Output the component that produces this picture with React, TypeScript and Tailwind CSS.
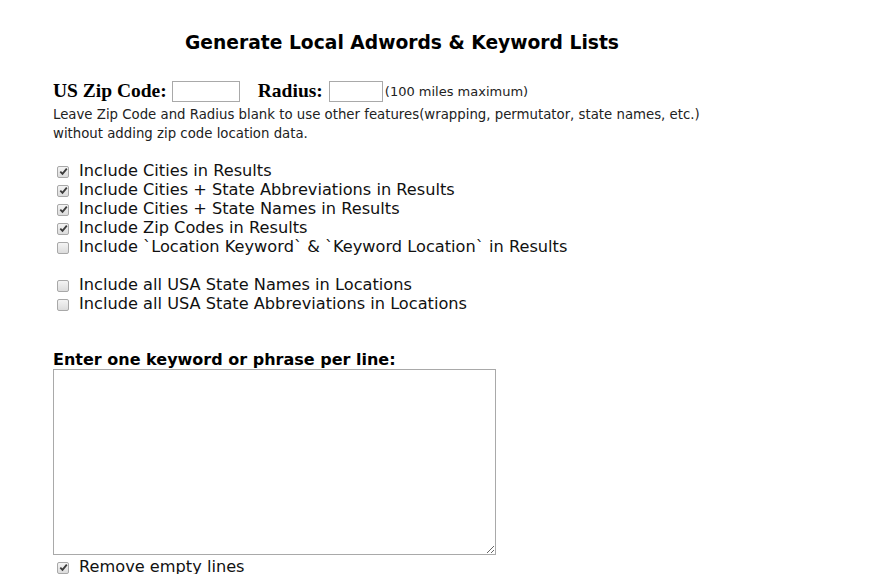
const verdana = { fontFamily: '"DejaVu Sans", Verdana, sans-serif' };
const serif = { fontFamily: '"Liberation Serif", "Times New Roman", serif' };

const Box = ({ checked }: { checked: boolean }) => (
  <span className="inline-flex w-[12px] h-[12px] shrink-0 items-center justify-center rounded-[2px] border border-[#a8a8a8] bg-gradient-to-b from-[#f4f4f4] to-[#dcdcdc]">
    {checked && (
      <svg width="9" height="9" viewBox="0 0 9 9">
        <path d="M1.3 4.6 L3.5 6.9 L7.8 1.6" fill="none" stroke="#3c3c3c" strokeWidth="1.8" />
      </svg>
    )}
  </span>
);

const Check = ({ label, checked }: { label: string; checked?: boolean }) => (
  <label className="flex items-center h-[19px] text-[16.2px] text-[#111]">
    <span className="w-[26px] pl-[4px] flex items-center">
      <Box checked={!!checked} />
    </span>
    <span className="whitespace-pre">{label}</span>
  </label>
);

export default function App() {
  return (
    <div className="min-h-screen bg-white text-black" style={verdana}>
      <div className="ml-[53px] w-[702px] pt-[31px]">
        <h1 className="text-center text-[18.7px] font-bold leading-[24px] pr-[4px]">
          Generate Local Adwords &amp; Keyword Lists
        </h1>

        <div className="mt-[24px] flex items-center h-[24px]">
          <span className="text-[19.5px] font-bold" style={serif}>
            US Zip Code:
          </span>
          <input className="ml-[5px] w-[68px] h-[21px] border border-[#a9a9a9] bg-white" />
          <span className="ml-[18px] text-[19.5px] font-bold" style={serif}>
            Radius:
          </span>
          <input className="ml-[6px] w-[54px] h-[21px] border border-[#a9a9a9] bg-white" />
          <span className="ml-[2px] text-[13px] text-[#222] pt-[1px]">(100 miles maximum)</span>
        </div>

        <p className="mt-[2px] text-[13.3px] leading-[19px] text-[#222]">
          Leave Zip Code and Radius blank to use other features(wrapping, permutator, state names, etc.)
          <br />
          without adding zip code location data.
        </p>

        <div className="mt-[19px]">
          <Check label="Include Cities in Results" checked />
          <Check label="Include Cities + State Abbreviations in Results" checked />
          <Check label="Include Cities + State Names in Results" checked />
          <Check label="Include Zip Codes in Results" checked />
          <Check label="Include `Location Keyword` & `Keyword Location` in Results" />
        </div>

        <div className="mt-[19px]">
          <Check label="Include all USA State Names in Locations" />
          <Check label="Include all USA State Abbreviations in Locations" />
        </div>

        <div className="mt-[37px] text-[16px] font-bold leading-[18px]">Enter one keyword or phrase per line:</div>
        <textarea className="block w-[443px] h-[186px] border border-[#a9a9a9] bg-white" />
        <div className="mt-[3px]">
          <Check label="Remove empty lines" checked />
        </div>
      </div>
    </div>
  );
}
